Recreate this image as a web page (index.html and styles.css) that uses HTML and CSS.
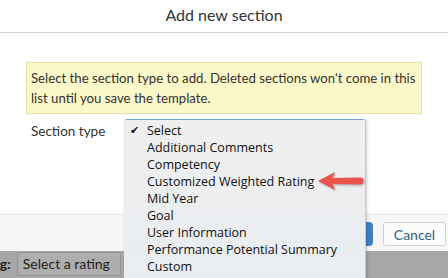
FILE: index.html
```html
<!DOCTYPE html>
<html lang="en">
<head>
    <meta charset="UTF-8">
    <meta name="viewport" content="width=device-width, initial-scale=1.0">
    <title>Add new section</title>
    <link rel="stylesheet" href="styles.css">
</head>
<body>
    <div class="modal">
        <div class="modal-header">Add new section</div>
        <div class="modal-body">
            <div class="notice">Select the section type to add. Deleted sections won't come in this list until you save the template.</div>
            <div class="field">
                <span class="field-label">Section type</span>
                <div class="select-box"></div>
            </div>
        </div>
        <div class="modal-footer">
            <button class="btn-primary">Add</button>
            <button class="btn-cancel">Cancel</button>
        </div>
    </div>

    <div class="behind">
        <span class="behind-label">Rating:</span>
        <span class="behind-select">Select a rating</span>
    </div>

    <!-- native select popup, open -->
    <ul class="popup">
        <li class="checked">Select</li>
        <li>Additional Comments</li>
        <li>Competency</li>
        <li>Customized Weighted Rating</li>
        <li>Mid Year</li>
        <li>Goal</li>
        <li>User Information</li>
        <li>Performance Potential Summary</li>
        <li>Custom</li>
    </ul>

    <svg class="arrow" width="50" height="24" viewBox="0 0 50 24">
        <path d="M2 12 L19 3 L16.5 9 L44 8.5 Q47.5 8.5 47.5 12 Q47.5 15.5 44 15.5 L16.5 15 L19 21 Z" fill="#e9544c"/>
    </svg>
</body>
</html>
```

FILE: styles.css
```css
body {
    margin: 0;
    width: 448px;
    height: 278px;
    overflow: hidden;
    background-color: #a7a7a7;
    font-family: Lato, "Liberation Sans", sans-serif;
    color: #333;
    position: relative;
}
.modal {
    background-color: white;
    height: 251px;
    display: flex;
    flex-direction: column;
}
.modal-header {
    height: 32px;
    line-height: 30px;
    border-bottom: 1px solid #cfcfcf;
    text-align: center;
    font-size: 16px;
    color: #333;
}
.modal-body {
    height: 181px;
    padding: 29px 26px 0 26px;
    box-sizing: border-box;
}
.notice {
    background-color: #fcf8c9;
    border: 1px solid #e8dea6;
    padding: 5px 4px;
    font-size: 13.2px;
    line-height: 20px;
    color: #333;
}
.field {
    display: flex;
    align-items: flex-start;
    margin-top: 5px;
}
.field-label {
    font-size: 13.5px;
    line-height: 24px;
    padding-left: 5px;
    width: 93px;
}
.select-box {
    width: 238px;
    height: 24px;
    border: 2px solid #7eaee6;
    border-radius: 4px;
    background-color: #f4f4f4;
}
.modal-footer {
    flex: 1;
    background-color: #f6f6f6;
    border-top: 1px solid #e6e6e6;
    display: flex;
    justify-content: flex-end;
    align-items: center;
    gap: 10px;
    padding: 2px 2px 0 0;
}
.btn-primary {
    background-color: #3f7fc4;
    color: white;
    border: none;
    border-radius: 4px;
    height: 24px;
    width: 60px;
    font-family: inherit;
    font-size: 14px;
}
.btn-cancel {
    background-color: #fbfbfb;
    color: #346187;
    border: 1px solid #d2d2d2;
    border-radius: 3px;
    height: 24px;
    width: 63px;
    font-family: inherit;
    font-size: 14px;
}
.behind {
    display: flex;
    align-items: center;
    height: 25px;
    margin-left: -33px;
    gap: 6px;
}
.behind-label {
    font-size: 14px;
    color: #222;
    font-weight: bold;
}
.behind-select {
    background-color: #aeaeae;
    border: 1px solid #959595;
    width: 97px;
    height: 22px;
    line-height: 22px;
    padding-left: 5px;
    font-size: 14px;
    color: #1e1e1e;
}
.popup {
    position: absolute;
    left: 124px;
    top: 120px;
    width: 242px;
    height: 170px;
    margin: 0;
    padding: 2px 0 0 0;
    box-sizing: border-box;
    list-style: none;
    background: linear-gradient(#efefef, #e9edf1);
    border-right: 1px solid #c9c9c9;
    box-shadow: 1px 0 3px rgba(0, 0, 0, 0.2);
    font-family: "Open Sans", sans-serif;
    font-size: 12.5px;
    color: #111;
}
.popup li {
    height: 17px;
    line-height: 17px;
    padding-left: 23px;
    position: relative;
}
.popup li.checked::before {
    content: "\2714";
    position: absolute;
    left: 6px;
    font-family: "DejaVu Sans", sans-serif;
    font-size: 11px;
}
.arrow {
    position: absolute;
    left: 316px;
    top: 169px;
    filter: drop-shadow(1px 1px 1px rgba(0, 0, 0, 0.3));
}
```
